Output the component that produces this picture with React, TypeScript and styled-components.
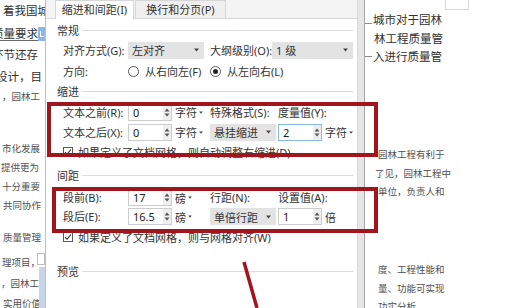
import styled, { createGlobalStyle } from "styled-components";

const GlobalStyle = createGlobalStyle`
  html, body {
    margin: 0;
    padding: 0;
    background: #ffffff;
  }
  body {
    width: 520px;
    height: 308px;
    overflow: hidden;
    font-family: "Noto Sans CJK SC", "Noto Sans", sans-serif;
  }
`;

const Screen = styled.div`
  position: relative;
  display: flex;
  width: 520px;
  height: 308px;
  overflow: hidden;
  background: #ffffff;
  font-family: "Noto Sans CJK SC", "Noto Sans", sans-serif;
`;

/* ---------- document behind the dialog ---------- */

const DocColumn = styled.div<{ $width?: number }>`
  position: relative;
  flex: ${(p) => (p.$width ? `0 0 ${p.$width}px` : "1 1 auto")};
  display: flex;
  flex-direction: column;
  align-items: flex-start;
  overflow: hidden;
`;

const DocLine = styled.div<{ $gap: number; $h: number; $big?: boolean; $indent: number }>`
  flex: 0 0 auto;
  display: flex;
  align-items: center;
  height: ${(p) => p.$h}px;
  margin-top: ${(p) => p.$gap}px;
  padding-left: ${(p) => Math.max(p.$indent, 0)}px;
  margin-left: ${(p) => Math.min(p.$indent, 0)}px;
  white-space: nowrap;
  font-size: ${(p) => (p.$big ? 11.5 : 9.5)}px;
  color: ${(p) => (p.$big ? "#2f2f2f" : "#505050")};
`;

const Underlined = styled.span`
  text-decoration: underline;
  text-decoration-color: #6a6a6a;
  text-underline-offset: 2px;
`;

const CropMark = styled.span<{ $low?: boolean }>`
  display: inline-block;
  width: 7px;
  height: 1px;
  margin-right: 1px;
  align-self: ${(p) => (p.$low ? "flex-end" : "center")};
  margin-bottom: ${(p) => (p.$low ? 3 : 0)}px;
  background: #8a8a8a;
`;

const CornerBox = styled.div`
  flex: 0 0 auto;
  width: 22px;
  height: 9px;
  margin-left: 80px;
  border: 1px solid #d8d8d8;
  border-top: none;
`;

const FloatIcon = styled.div`
  position: absolute;
  right: 0;
  top: 27px;
  width: 7px;
  height: 14px;
  border-radius: 1px 0 0 1px;
  background: #8fb6e3;
  &::after {
    content: "";
    position: absolute;
    left: 2px;
    top: 4px;
    width: 3px;
    height: 5px;
    border-left: 1px solid #fff;
    border-bottom: 1px solid #fff;
  }
`;

const SideTab = styled.div`
  position: absolute;
  right: 0;
  top: 253px;
  width: 6px;
  height: 10px;
  border: 1px solid #bdbdbd;
  background: #fff;
`;

const SideBar = styled.div`
  position: absolute;
  right: 0;
  top: 267px;
  width: 6px;
  height: 41px;
  background: #c7d5e8;
`;

/* ---------- dialog ---------- */

const Dialog = styled.div`
  flex: 0 0 320px;
  display: flex;
  border-left: 1px solid #bfbfbf;
  box-sizing: border-box;
  font-family: "Noto Sans", "Noto Sans CJK SC", sans-serif;
`;

const DialogMain = styled.div`
  flex: 1 1 auto;
  display: flex;
  flex-direction: column;
  background: #ffffff;
`;

const DialogEdge = styled.div`
  flex: 0 0 6px;
  background: #e6e6e6;
  border-left: 1px solid #d9d9d9;
  border-right: 1px solid #a8a8a8;
`;

const TabBar = styled.div`
  display: flex;
  align-items: flex-start;
  height: 18px;
  padding-left: 9px;
  background: #f4f4f4;
  border-bottom: 1px solid #d6d6d6;
`;

const Tab = styled.div<{ $active?: boolean }>`
  box-sizing: border-box;
  width: ${(p) => (p.$active ? 79 : 91)}px;
  height: ${(p) => (p.$active ? 19 : 18)}px;
  margin-right: 1px;
  border: 1px solid #d6d6d6;
  border-bottom: none;
  background: ${(p) => (p.$active ? "#ffffff" : "#efefef")};
  font-size: 11px;
  line-height: 17px;
  text-align: center;
  color: #333;
`;

const TabPanel = styled.div`
  display: flex;
  flex-direction: column;
  padding: 3px 4px 0 11px;
`;

const SectionTitle = styled.div<{ $gap?: number }>`
  display: flex;
  align-items: center;
  gap: 3px;
  height: 16px;
  margin-top: ${(p) => p.$gap ?? 0}px;
  font-size: 11px;
  color: #333;
  &::after {
    content: "";
    flex: 1;
    height: 1px;
    background: #dcdcdc;
  }
`;

const FlexRow = styled.div<{ $gap?: number }>`
  display: flex;
  align-items: center;
  height: 20px;
  margin-top: ${(p) => p.$gap ?? 0}px;
  padding-left: 6px;
`;

const GridRow = styled.div<{ $gap?: number; $h?: number }>`
  display: grid;
  grid-template-columns: 65px 47px 35px 68px 47px auto;
  align-items: center;
  height: ${(p) => p.$h ?? 20}px;
  margin-top: ${(p) => p.$gap ?? 0}px;
  padding-left: 6px;
`;

const Label = styled.span<{ $w?: number; $ml?: number }>`
  flex: 0 0 auto;
  width: ${(p) => (p.$w ? `${p.$w}px` : "auto")};
  margin-left: ${(p) => p.$ml ?? 0}px;
  font-size: 11px;
  line-height: 17px;
  color: #333;
  white-space: nowrap;
`;

const Unit = styled.span`
  display: flex;
  align-items: center;
  gap: 2px;
  font-size: 11px;
  color: #333;
  white-space: nowrap;
`;

const SelectBox = styled.div<{ $w: number }>`
  box-sizing: border-box;
  display: flex;
  align-items: center;
  justify-content: space-between;
  width: ${(p) => p.$w}px;
  height: 17px;
  padding: 0 5px 0 4px;
  background: #e3e3e3;
  font-size: 11px;
  color: #333;
  white-space: nowrap;
`;

const SpinBox = styled.div<{ $focus?: boolean }>`
  box-sizing: border-box;
  display: flex;
  align-items: center;
  width: 44px;
  height: 17px;
  padding-left: 4px;
  border: 1px solid ${(p) => (p.$focus ? "#86b7e6" : "#cdcdcd")};
  background: #ffffff;
  font-size: 11px;
  color: #222;
`;

const SpinValue = styled.span`
  flex: 1;
`;

const RadioItem = styled.span<{ $w?: number }>`
  display: flex;
  align-items: center;
  gap: 6px;
  width: ${(p) => (p.$w ? `${p.$w}px` : "auto")};
  font-size: 11px;
  color: #333;
  white-space: nowrap;
`;

const RadioDot = styled.span<{ $on?: boolean }>`
  box-sizing: border-box;
  display: flex;
  align-items: center;
  justify-content: center;
  width: 11px;
  height: 11px;
  border: 1px solid #5a5a5a;
  border-radius: 50%;
  background: #fff;
  &::after {
    content: "";
    width: 5px;
    height: 5px;
    border-radius: 50%;
    background: ${(p) => (p.$on ? "#222" : "transparent")};
  }
`;

const CheckRow = styled.div<{ $gap?: number }>`
  display: flex;
  align-items: center;
  gap: 5px;
  height: 20px;
  margin-top: ${(p) => p.$gap ?? 0}px;
  padding-left: 6px;
  font-size: 11px;
  color: #333;
  white-space: nowrap;
`;

const CheckSquare = styled.span`
  box-sizing: border-box;
  display: flex;
  align-items: center;
  justify-content: center;
  width: 10px;
  height: 10px;
  border: 1px solid #5a5a5a;
  background: #fff;
`;

/* ---------- annotations ---------- */

const Annotation = styled.div<{ $x: number; $y: number; $w: number; $h: number }>`
  position: absolute;
  left: ${(p) => p.$x}px;
  top: ${(p) => p.$y}px;
  width: ${(p) => p.$w}px;
  height: ${(p) => p.$h}px;
  box-sizing: border-box;
  border: 4px solid #a1151c;
  pointer-events: none;
`;

const Scribble = styled.svg`
  position: absolute;
  left: 0;
  top: 0;
  pointer-events: none;
`;

const Caret = ({ size = 5 }: { size?: number }) => (
  <svg width={size} height={size - 1} viewBox="0 0 5 4">
    <path d="M0 0.5h5L2.5 3.5z" fill="#444" />
  </svg>
);

const SpinArrows = () => (
  <svg width="8" height="15" viewBox="0 0 8 15">
    <rect x="0" y="0" width="8" height="15" fill="#eeeeee" />
    <path d="M1.5 6.5h5L4 3.5z" fill="#555" />
    <path d="M1.5 8.5h5L4 11.5z" fill="#555" />
  </svg>
);

const Tick = () => (
  <svg width="8" height="8" viewBox="0 0 8 8">
    <path d="M1 4.2l2 2L7 1.5" stroke="#333" strokeWidth="1.1" fill="none" />
  </svg>
);

type DocText = {
  y: number;
  text: string;
  big?: boolean;
  indent: number;
  underline?: boolean;
  mark?: "low" | "mid";
};

const leftLines: DocText[] = [
  { y: 10, text: "着我国城", big: true, indent: 3 },
  { y: 33, text: "质量要求", big: true, indent: -8, underline: true },
  { y: 54, text: "环节还存", big: true, indent: -8 },
  { y: 76, text: "设计，目", big: true, indent: -4 },
  { y: 96, text: "，园林工", indent: 2 },
  { y: 148, text: "市化发展", indent: 2 },
  { y: 167, text: "提供更为", indent: 1 },
  { y: 186, text: "十分重要", indent: 2 },
  { y: 205, text: "共同协作", indent: 3 },
  { y: 237, text: "质量管理", indent: 3 },
  { y: 262, text: "理项目，", indent: 2 },
  { y: 283, text: "，园林工", indent: 1 },
  { y: 303, text: "实用价值", indent: 3 },
];

const rightLines: DocText[] = [
  { y: 18, text: "城市对于园林", big: true, indent: 0, mark: "low" },
  { y: 37, text: "林工程质量管", big: true, indent: 9 },
  { y: 55, text: "入进行质量管", big: true, indent: 0, mark: "mid" },
  { y: 153, text: "园林工程有利于", indent: 13 },
  { y: 172, text: "了见，园林工程中", indent: 10 },
  { y: 190, text: "单位，负责人和", indent: 13 },
  { y: 268, text: "度、工程性能和", indent: 13 },
  { y: 287, text: "量、功能可实现", indent: 13 },
  { y: 305, text: "功实分析。", indent: 13 },
];

function stackLines(lines: DocText[], start = 0) {
  let bottom = start;
  return lines.map((line) => {
    const h = line.big ? 16 : 13;
    const top = line.y - h / 2;
    const gap = top - bottom;
    bottom = top + h;
    return { ...line, h, gap };
  });
}

function DocLines({ lines, start }: { lines: DocText[]; start?: number }) {
  return (
    <>
      {stackLines(lines, start).map((line) => (
        <DocLine
          key={line.y}
          $gap={line.gap}
          $h={line.h}
          $big={line.big}
          $indent={line.indent}
        >
          {line.mark ? <CropMark $low={line.mark === "low"} /> : null}
          {line.underline ? <Underlined>{line.text}</Underlined> : line.text}
        </DocLine>
      ))}
    </>
  );
}

function ParagraphDialog() {
  return (
    <Dialog>
      <DialogMain>
        <TabBar>
          <Tab $active>缩进和间距(I)</Tab>
          <Tab>换行和分页(P)</Tab>
        </TabBar>

        <TabPanel>
          <SectionTitle>常规</SectionTitle>
          <FlexRow $gap={2}>
            <Label $w={65}>对齐方式(G):</Label>
            <SelectBox $w={76}>
              左对齐
              <Caret />
            </SelectBox>
            <Label $w={62} $ml={6}>
              大纲级别(O):
            </Label>
            <SelectBox $w={81}>
              1 级
              <Caret />
            </SelectBox>
          </FlexRow>
          <FlexRow $gap={1}>
            <Label $w={65}>方向:</Label>
            <RadioItem $w={82}>
              <RadioDot />
              从右向左(F)
            </RadioItem>
            <RadioItem>
              <RadioDot $on />
              从左向右(L)
            </RadioItem>
          </FlexRow>

          <SectionTitle $gap={2}>缩进</SectionTitle>
          <GridRow $gap={3}>
            <Label>文本之前(R):</Label>
            <SpinBox>
              <SpinValue>0</SpinValue>
              <SpinArrows />
            </SpinBox>
            <Unit>
              字符
              <Caret size={4} />
            </Unit>
            <Label>特殊格式(S):</Label>
            <Label>度量值(Y):</Label>
          </GridRow>
          <GridRow>
            <Label>文本之后(X):</Label>
            <SpinBox>
              <SpinValue>0</SpinValue>
              <SpinArrows />
            </SpinBox>
            <Unit>
              字符
              <Caret size={4} />
            </Unit>
            <SelectBox $w={66}>
              悬挂缩进
              <Caret />
            </SelectBox>
            <SpinBox $focus>
              <SpinValue>2</SpinValue>
              <SpinArrows />
            </SpinBox>
            <Unit>
              字符
              <Caret size={4} />
            </Unit>
          </GridRow>
          <CheckRow>
            <CheckSquare>
              <Tick />
            </CheckSquare>
            如果定义了文档网格，则自动调整右缩进(D)
          </CheckRow>

          <SectionTitle $gap={5}>间距</SectionTitle>
          <GridRow $gap={5} $h={19}>
            <Label>段前(B):</Label>
            <SpinBox>
              <SpinValue>17</SpinValue>
              <SpinArrows />
            </SpinBox>
            <Unit>
              磅
              <Caret size={4} />
            </Unit>
            <Label>行距(N):</Label>
            <Label>设置值(A):</Label>
          </GridRow>
          <GridRow $h={19}>
            <Label>段后(E):</Label>
            <SpinBox>
              <SpinValue>16.5</SpinValue>
              <SpinArrows />
            </SpinBox>
            <Unit>
              磅
              <Caret size={4} />
            </Unit>
            <SelectBox $w={66}>
              单倍行距
              <Caret />
            </SelectBox>
            <SpinBox>
              <SpinValue>1</SpinValue>
              <SpinArrows />
            </SpinBox>
            <Unit>倍</Unit>
          </GridRow>
          <CheckRow $gap={1}>
            <CheckSquare>
              <Tick />
            </CheckSquare>
            如果定义了文档网格，则与网格对齐(W)
          </CheckRow>

          <SectionTitle $gap={16}>预览</SectionTitle>
        </TabPanel>
      </DialogMain>
      <DialogEdge />
    </Dialog>
  );
}

export default function App() {
  return (
    <>
      <GlobalStyle />
      <Screen>
        <DocColumn $width={45}>
          <DocLines lines={leftLines} />
          <FloatIcon />
          <SideTab />
          <SideBar />
        </DocColumn>

        <ParagraphDialog />

        <DocColumn>
          <CornerBox />
          <DocLines lines={rightLines} start={9} />
        </DocColumn>

        <Annotation $x={47} $y={102} $w={331} $h={55} />
        <Annotation $x={52} $y={187} $w={326} $h={46} />
        <Scribble width="520" height="308" viewBox="0 0 520 308">
          <path d="M244 262 L257 308" stroke="#a1151c" strokeWidth="3.5" />
        </Scribble>
      </Screen>
    </>
  );
}
